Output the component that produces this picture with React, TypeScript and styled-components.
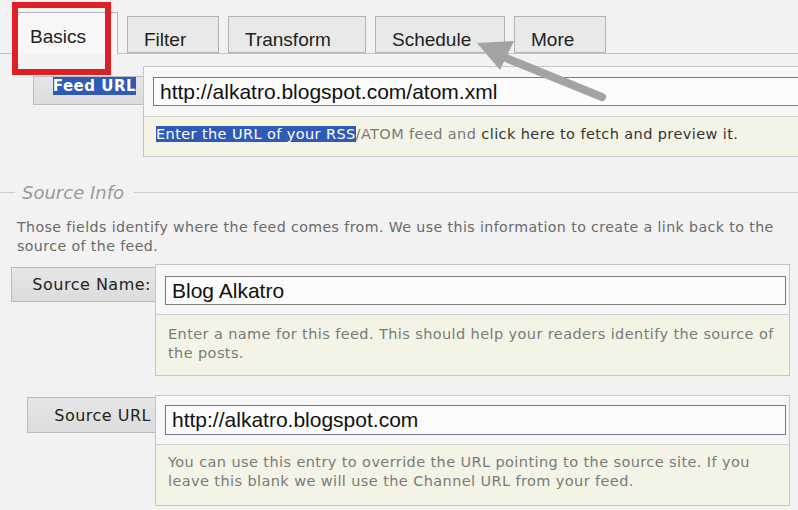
import React from "react";
import styled, { createGlobalStyle } from "styled-components";

const GlobalStyle = createGlobalStyle`
  html, body {
    margin: 0;
    padding: 0;
    background: #f2f2f2;
  }
  body {
    font-family: "Liberation Sans", Arial, sans-serif;
    overflow: hidden;
  }
`;

const Page = styled.div`
  position: relative;
  width: 798px;
  height: 510px;
  overflow: hidden;
  background: #f2f2f2;
  color: #333;
`;

const TabBar = styled.div`
  display: flex;
  align-items: flex-end;
  gap: 9px;
  height: 54px;
  padding-left: 15px;
  box-sizing: border-box;
  border-bottom: 1px solid #c4c4c4;
`;

const Tab = styled.div<{ $width: number; $active?: boolean }>`
  width: ${(p) => p.$width}px;
  height: ${(p) => (p.$active ? 42 : 37)}px;
  box-sizing: border-box;
  display: flex;
  align-items: center;
  padding-left: ${(p) => (p.$active ? 14 : 16)}px;
  padding-top: ${(p) => (p.$active ? 7 : 11)}px;
  margin-bottom: ${(p) => (p.$active ? -1 : 0)}px;
  background: ${(p) => (p.$active ? "#f7f7f7" : "#e9e9e9")};
  border: 1px solid #b4b4b4;
  border-bottom: ${(p) => (p.$active ? "none" : "1px solid #b4b4b4")};
  font-size: 19px;
  color: #222;
`;

const RedFrame = styled.div`
  position: absolute;
  left: 12px;
  top: 2px;
  width: 99px;
  height: 73px;
  box-sizing: border-box;
  border: 6px solid #de1f26;
`;

const ArrowSvg = styled.svg`
  position: absolute;
  left: 470px;
  top: 34px;
`;

const FieldRow = styled.div<{ $top: number; $labelLeft: number }>`
  display: flex;
  align-items: flex-start;
  margin-top: ${(p) => p.$top}px;
  padding-left: ${(p) => p.$labelLeft}px;
`;

const Label = styled.div<{ $width: number; $height: number; $offset: number; $top?: boolean }>`
  width: ${(p) => p.$width}px;
  height: ${(p) => p.$height}px;
  margin-top: ${(p) => p.$offset}px;
  box-sizing: border-box;
  flex-shrink: 0;
  display: flex;
  align-items: ${(p) => (p.$top ? "flex-start" : "center")};
  justify-content: flex-end;
  padding-right: ${(p) => (p.$top ? 7 : 4)}px;
  background: linear-gradient(#e6e6e6, #dcdcdc);
  border: 1px solid #bcbcbc;
  border-right: none;
  font-family: "DejaVu Sans", Verdana, sans-serif;
  font-size: ${(p) => (p.$top ? 15 : 16)}px;
  letter-spacing: 0.5px;
  color: #222;
`;

const FieldBox = styled.div<{ $wide?: boolean }>`
  flex: ${(p) => (p.$wide ? "none" : "1")};
  width: ${(p) => (p.$wide ? "680px" : "auto")};
  margin-right: ${(p) => (p.$wide ? 0 : 8)}px;
  box-sizing: border-box;
  background: #f7f7f7;
  border: 1px solid #c6c6c6;
  border-right: ${(p) => (p.$wide ? "none" : "1px solid #c6c6c6")};
`;

const InputWrap = styled.div<{ $pad: number; $gap: number }>`
  padding: ${(p) => p.$pad}px 3px ${(p) => p.$gap}px 9px;
  border-bottom: 1px solid #cfcfcf;
`;

const TextInput = styled.input<{ $height: number }>`
  display: block;
  width: 100%;
  height: ${(p) => p.$height}px;
  box-sizing: border-box;
  margin: 0;
  padding: 0 0 0 6px;
  border: 1px solid #7c7c7c;
  border-radius: 0;
  background: #fcfcfc;
  font-family: "Liberation Sans", Arial, sans-serif;
  font-size: 21px;
  color: #111;
  outline: none;
`;

const Hint = styled.div<{ $height: number; $padTop: number }>`
  height: ${(p) => p.$height}px;
  box-sizing: border-box;
  padding: ${(p) => p.$padTop}px 12px 0 12px;
  background: #f4f4e6;
  font-family: "DejaVu Sans", Verdana, sans-serif;
  font-size: 14.5px;
  letter-spacing: 0.4px;
  line-height: 18.5px;
  color: #7a7a7a;
`;

const Selected = styled.span`
  background: #2f5bb7;
  color: #fff;
`;

const Dark = styled.span`
  color: #333;
`;

const Legend = styled.div`
  display: flex;
  align-items: center;
  gap: 7px;
  margin-top: 24px;
  height: 22px;

  &::before {
    content: "";
    width: 15px;
    border-top: 1px solid #cfcfcf;
  }
  &::after {
    content: "";
    flex: 1;
    border-top: 1px solid #cfcfcf;
    margin-left: 3px;
  }
`;

const LegendText = styled.span`
  font-family: "DejaVu Sans", Verdana, sans-serif;
  font-style: italic;
  font-size: 18px;
  color: #9a9a9a;
`;

const Description = styled.p`
  margin: 15px 0 0 17px;
  width: 775px;
  font-family: "DejaVu Sans", Verdana, sans-serif;
  font-size: 14.2px;
  letter-spacing: 0.4px;
  line-height: 19px;
  color: #6a6a6a;
`;

export default function App() {
  return (
    <Page>
      <GlobalStyle />
      <TabBar>
        <Tab $width={103} $active>Basics</Tab>
        <Tab $width={92}>Filter</Tab>
        <Tab $width={138}>Transform</Tab>
        <Tab $width={130}>Schedule</Tab>
        <Tab $width={92}>More</Tab>
      </TabBar>

      <FieldRow $top={12} $labelLeft={33}>
        <Label $width={110} $height={29} $offset={10} $top>
          <Selected>
            <b>Feed URL</b>
          </Selected>
        </Label>
        <FieldBox $wide>
          <InputWrap $pad={10} $gap={10}>
            <TextInput $height={29} readOnly value="http://alkatro.blogspot.com/atom.xml" />
          </InputWrap>
          <Hint $height={39} $padTop={8}>
            <Selected>Enter the URL of your RSS</Selected>/ATOM feed and{" "}
            <Dark>click here to fetch and preview it.</Dark>
          </Hint>
        </FieldBox>
      </FieldRow>

      <Legend>
        <LegendText>Source Info</LegendText>
      </Legend>
      <Description>
        Those fields identify where the feed comes from. We use this information to create a link back
        to the source of the feed.
      </Description>

      <FieldRow $top={8} $labelLeft={11}>
        <Label $width={144} $height={35} $offset={3}>
          Source Name:
        </Label>
        <FieldBox>
          <InputWrap $pad={11} $gap={9}>
            <TextInput $height={29} readOnly value="Blog Alkatro" />
          </InputWrap>
          <Hint $height={60} $padTop={10}>
            Enter a name for this feed. This should help your readers identify the source of the posts.
          </Hint>
        </FieldBox>
      </FieldRow>

      <FieldRow $top={19} $labelLeft={27}>
        <Label $width={128} $height={36} $offset={2}>
          Source URL
        </Label>
        <FieldBox>
          <InputWrap $pad={9} $gap={9}>
            <TextInput $height={30} readOnly value="http://alkatro.blogspot.com" />
          </InputWrap>
          <Hint $height={60} $padTop={8}>
            You can use this entry to override the URL pointing to the source site. If you leave this
            blank we will use the Channel URL from your feed.
          </Hint>
        </FieldBox>
      </FieldRow>

      <RedFrame />
      <ArrowSvg width="140" height="72" viewBox="0 0 140 72">
        <line x1="36" y1="24" x2="132" y2="63" stroke="#a3a3a3" strokeWidth="8" strokeLinecap="round" />
        <polygon points="7,9 44,7 30,36" fill="#a3a3a3" />
      </ArrowSvg>
    </Page>
  );
}
